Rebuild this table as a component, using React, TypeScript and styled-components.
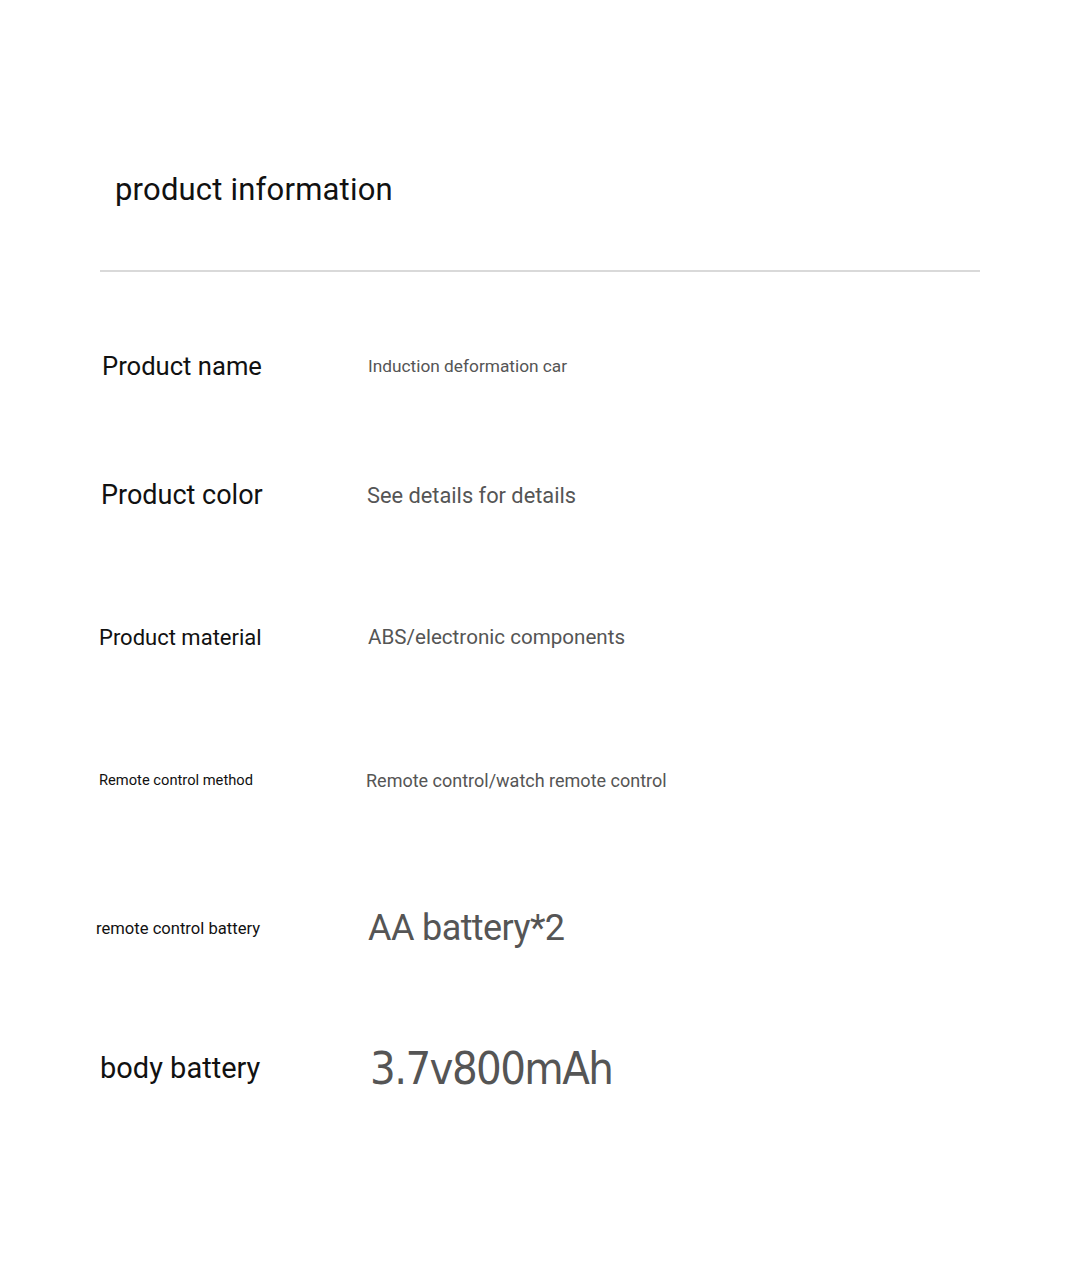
import styled, { createGlobalStyle } from 'styled-components';

const GlobalStyle = createGlobalStyle`
  body {
    margin: 0;
    background: #ffffff;
    font-family: Roboto, "Liberation Sans", sans-serif;
  }
`;

type Spec = {
  label: string;
  value: string;
  gap: number;
  labelSize: number;
  valueSize: number;
  labelShift?: number;
  valueShift?: number;
  valueFont?: string;
  spacing?: number;
};

const specs: Spec[] = [
  { label: 'Product name', value: 'Induction deformation car', gap: 64, labelSize: 25.6, valueSize: 17.3, labelShift: 2 },
  { label: 'Product color', value: 'See details for details', gap: 69, labelSize: 27, valueSize: 21.8, labelShift: 1, valueShift: -1 },
  { label: 'Product material', value: 'ABS/electronic components', gap: 82, labelSize: 22, valueSize: 20.6, labelShift: -1 },
  { label: 'Remote control method', value: 'Remote control/watch remote control', gap: 83, labelSize: 14.7, valueSize: 18, labelShift: -1, valueShift: -2 },
  { label: 'remote control battery', value: 'AA battery*2', gap: 88, labelSize: 16.6, valueSize: 36, labelShift: -4, spacing: -0.6 },
  { label: 'body battery', value: '3.7v800mAh', gap: 80, labelSize: 29, valueSize: 45, valueShift: 2, spacing: -1.6, valueFont: '"DejaVu Sans Condensed", "DejaVu Sans", Roboto, sans-serif' },
];

const App = () => {
  return (
    <Page>
      <GlobalStyle />
      <Header>
        <Title>product information</Title>
      </Header>
      <Divider />
      <SpecList>
        {specs.map((s) => (
          <SpecRow key={s.label} gap={s.gap}>
            <Label size={s.labelSize} shift={s.labelShift || 0}>
              {s.label}
            </Label>
            <Value size={s.valueSize} shift={s.valueShift || 0} font={s.valueFont} spacing={s.spacing || 0}>
              {s.value}
            </Value>
          </SpecRow>
        ))}
      </SpecList>
    </Page>
  );
};

const Page = styled.div`
  width: 1080px;
  height: 1280px;
  background: #ffffff;
  overflow: hidden;
`;

const Header = styled.div`
  display: flex;
  align-items: center;
  padding: 129px 0 0 115px;
  box-sizing: border-box;
  height: 250px;
`;

const Title = styled.div`
  font-size: 31px;
  color: #111111;
  letter-spacing: 0.2px;
`;

const Divider = styled.div`
  margin: 20px 0 0 100px;
  width: 880px;
  height: 2px;
  background: #d9d9d9;
`;

const SpecList = styled.div`
  display: flex;
  flex-direction: column;
`;

const SpecRow = styled.div<{ gap: number }>`
  display: flex;
  align-items: center;
  height: 60px;
  margin-top: ${(p) => p.gap}px;
`;

const Label = styled.div<{ size: number; shift: number }>`
  flex: 0 0 368px;
  box-sizing: border-box;
  padding-left: ${(p) => 100 + p.shift}px;
  font-size: ${(p) => p.size}px;
  color: #111111;
  white-space: nowrap;
`;

const Value = styled.div<{ size: number; shift: number; font?: string; spacing: number }>`
  margin-left: ${(p) => p.shift}px;
  font-size: ${(p) => p.size}px;
  font-family: ${(p) => p.font || 'Roboto, "Liberation Sans", sans-serif'};
  letter-spacing: ${(p) => p.spacing}px;
  color: #555555;
  white-space: nowrap;
`;

export default App;
